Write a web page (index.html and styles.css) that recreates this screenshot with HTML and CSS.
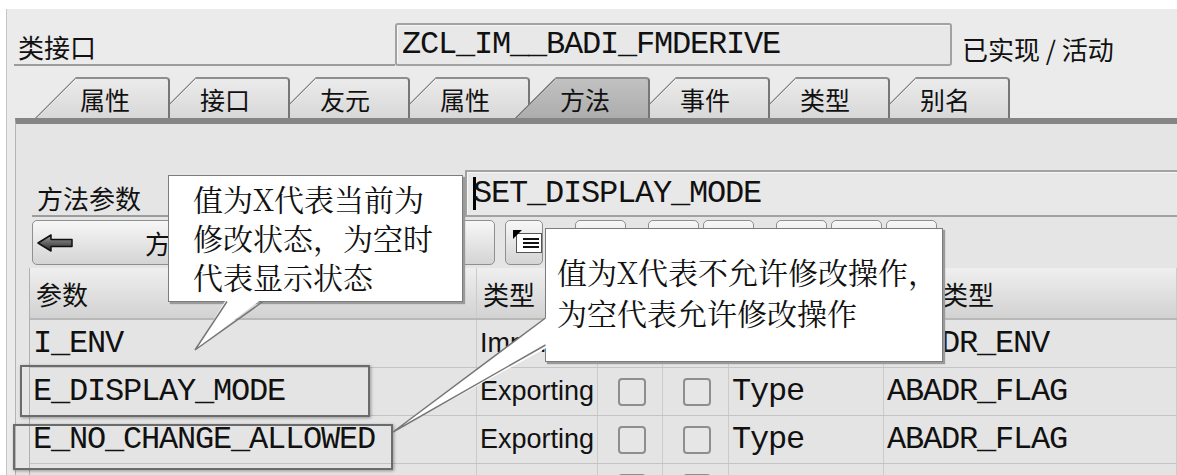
FILE: index.html
```html
<!doctype html>
<html lang="zh">
  <head>
    <meta charset="UTF-8" />
    <meta name="viewport" content="width=device-width, initial-scale=1.0" />
    <title>类接口 ZCL_IM__BADI_FMDERIVE</title>
    <link rel="stylesheet" href="styles.css">
  </head>
  <body>
    <div class="window">
      <div class="class-row">
        <div class="class-label">类接口</div>
        <div class="field class-name">ZCL_IM__BADI_FMDERIVE</div>
        <div class="status">已实现 / 活动</div>
      </div>

      <div class="tabs">
        <div class="tab">属性</div>
        <div class="tab">接口</div>
        <div class="tab">友元</div>
        <div class="tab">属性</div>
        <div class="tab active">方法</div>
        <div class="tab">事件</div>
        <div class="tab">类型</div>
        <div class="tab">别名</div>
      </div>

      <div class="panel">
        <div class="param-row">
          <div class="param-label">方法参数</div>
          <div class="field method-name"><span class="caret"></span>SET_DISPLAY_MODE</div>
        </div>

        <div class="toolbar">
          <button class="btn back">
            <svg width="36" height="18" viewBox="0 0 36 18">
              <defs>
                <linearGradient id="arrowFill" x1="0" y1="0" x2="0" y2="1">
                  <stop offset="0" stop-color="#a0a0a0" />
                  <stop offset="1" stop-color="#262626" />
                </linearGradient>
              </defs>
              <path d="M1 9 L14 1 L14 5.5 L35 5.5 L35 12.5 L14 12.5 L14 17 Z" fill="url(#arrowFill)" stroke="#111" stroke-width="1.5" stroke-linejoin="round" />
            </svg>
            <span class="back-text">方法</span>
          </button>
          <button class="btn icon-btn">
            <svg width="30" height="24" viewBox="0 0 30 24">
              <rect x="3.5" y="3.5" width="25" height="19" fill="#fff" stroke="#555" />
              <path d="M0 0 H9 L0 9 Z" fill="#000" />
              <path d="M10 9 H26 M10 13 H26 M10 17 H26" stroke="#111" stroke-width="2" />
            </svg>
          </button>
          <button class="btn tool lead"></button>
          <button class="btn tool group"></button>
          <button class="btn tool"></button>
          <button class="btn tool group"></button>
          <button class="btn tool"></button>
          <button class="btn tool"></button>
        </div>

        <div class="grid">
          <!-- headers of the columns 3-5 sit under the right balloon -->
          <div class="row head">
            <div class="cell">参数</div>
            <div class="cell">类型</div>
            <div class="cell"></div>
            <div class="cell"></div>
            <div class="cell"></div>
            <div class="cell">关联类型</div>
          </div>
          <div class="row">
            <div class="cell code">I_ENV</div>
            <div class="cell kind">Importing</div>
            <div class="cell"><span class="check"></span></div>
            <div class="cell"><span class="check"></span></div>
            <div class="cell code"></div>
            <div class="cell code">ABADR_ENV</div>
          </div>
          <div class="row">
            <div class="cell code">E_DISPLAY_MODE</div>
            <div class="cell kind">Exporting</div>
            <div class="cell"><span class="check"></span></div>
            <div class="cell"><span class="check"></span></div>
            <div class="cell code">Type</div>
            <div class="cell code">ABADR_FLAG</div>
          </div>
          <div class="row">
            <div class="cell code">E_NO_CHANGE_ALLOWED</div>
            <div class="cell kind">Exporting</div>
            <div class="cell"><span class="check"></span></div>
            <div class="cell"><span class="check"></span></div>
            <div class="cell code">Type</div>
            <div class="cell code">ABADR_FLAG</div>
          </div>
          <div class="row">
            <div class="cell code"></div>
            <div class="cell kind"></div>
            <div class="cell"><span class="check"></span></div>
            <div class="cell"><span class="check"></span></div>
            <div class="cell code"></div>
            <div class="cell code"></div>
          </div>

          <!-- highlight frames drawn over the two export rows -->
          <div class="mark mark-display"></div>
          <div class="mark mark-change"></div>
        </div>
      </div>
    </div>

    <div class="callout callout-display">
      值为X代表当前为<br>修改状态，为空时<br>代表显示状态
      <svg class="tail" viewBox="0 0 1 1">
        <polygon points="58,122 94,122 26,174" fill="#fff" />
        <polyline points="58,125.5 26,174 94,125.5" fill="none" stroke="#777" stroke-width="1.5" />
      </svg>
    </div>

    <div class="callout callout-change">
      值为X代表不允许修改操作，<br>为空代表允许修改操作
      <svg class="tail" viewBox="0 0 1 1">
        <polygon points="2,87 2,118 -153,203" fill="#fff" />
        <polyline points="-0.5,89 -153,203 -0.5,116" fill="none" stroke="#777" stroke-width="1.5" />
      </svg>
    </div>
  </body>
</html>
```

FILE: styles.css
```css
* {
  box-sizing: border-box;
}

body {
  margin: 0;
  height: 475px;
  overflow: hidden;
  background: #fff;
  color: #111;
  font-family: "Noto Sans CJK SC", sans-serif;
}

.window {
  margin: 9px 0 0 6px;
  min-height: 470px;
  background: #ebebeb;
  border-left: 1px solid #c6c6c6;
}

/* top line: class name */

.class-row {
  display: flex;
  height: 57px;
  padding-top: 14px;
}

.class-label {
  width: 381px;
  height: 43px;
  margin-left: 7px;
  padding: 6px 0 0 4px;
  border-bottom: 2px solid #9c9c9c;
  font-size: 26px;
  line-height: 35px;
}

.field {
  background: #e8e8e8;
  border: 2px solid #a2a2a2;
  border-radius: 3px;
  box-shadow: inset 1px 1px 0 #f6f6f6;
  font-family: "Liberation Mono", monospace;
  font-size: 32px;
  letter-spacing: -1.2px;
  white-space: nowrap;
}

.class-name {
  width: 557px;
  height: 43px;
  padding-left: 5px;
  line-height: 39px;
}

.status {
  margin-left: 10px;
  padding-top: 8px;
  font-size: 26px;
  line-height: 35px;
}

/* tab strip */

.tabs {
  display: flex;
  align-items: flex-end;
  height: 52px;
  padding-left: 28px;
}

.tab {
  width: 135px;
  height: 41px;
  margin-left: -15px;
  padding: 5px 0 0 45px;
  font-size: 25px;
  line-height: 30px;
  border-top: 2px solid #8e8e8e;
  border-right: 2px solid #767676;
  border-top-right-radius: 4px;
  clip-path: polygon(41px 0, 100% 0, 100% 100%, 0 100%);
  background:
    linear-gradient(to top left, transparent calc(50% - 1.2px), #858585 calc(50% - 1.2px), #858585 calc(50% + 1.2px), transparent calc(50% + 1.2px)) 0 0 / 41px 41px no-repeat border-box,
    linear-gradient(#ececec, #d8d8d8) border-box;
}

.tab:first-child {
  margin-left: 0;
}

.tab:nth-child(1) { z-index: 8; }
.tab:nth-child(2) { z-index: 7; }
.tab:nth-child(3) { z-index: 6; }
.tab:nth-child(4) { z-index: 5; }
.tab:nth-child(6) { z-index: 3; }
.tab:nth-child(7) { z-index: 2; }
.tab:nth-child(8) { z-index: 1; }

.tab.active {
  z-index: 9;
  background:
    linear-gradient(to top left, transparent calc(50% - 1.2px), #707070 calc(50% - 1.2px), #707070 calc(50% + 1.2px), transparent calc(50% + 1.2px)) 0 0 / 41px 41px no-repeat border-box,
    linear-gradient(#c2c2c2, #adadad) border-box;
}

/* tab page */

.panel {
  margin-left: 8px;
  background: #e5e5e5;
  border-left: 1px solid #b4b4b4;
  border-top: 6px solid #858585;
}

.param-row {
  display: flex;
  height: 47px;
  margin-top: 46px;
}

.param-label {
  width: 433px;
  margin-left: 16px;
  padding: 10px 0 0 5px;
  border-bottom: 2px solid #9c9c9c;
  font-size: 26px;
  line-height: 35px;
}

.method-name {
  flex: 1;
  border-right: none;
  border-radius: 0;
  padding-left: 6px;
  line-height: 43px;
}

.caret {
  display: inline-block;
  width: 3px;
  height: 33px;
  margin-right: -3px;
  vertical-align: middle;
  background: #000;
}

.toolbar {
  display: flex;
  height: 51px;
  padding: 3px 0 0 16px;
}

.btn {
  height: 45px;
  padding: 0;
  border: 1px solid #8f8f8f;
  border-radius: 5px;
  background: linear-gradient(#f7f7f7, #d4d4d4);
  font: inherit;
  color: inherit;
}

.back {
  width: 463px;
  display: flex;
  align-items: center;
  padding-left: 4px;
  font-size: 26px;
}

.back-text {
  margin-left: 72px;
}

.icon-btn {
  width: 38px;
  margin-left: 10px;
  padding: 3px 0 0 7px;
  text-align: left;
}

.tool {
  width: 51px;
  margin-left: 4px;
}

.tool.lead {
  margin-left: 32px;
}

.tool.group {
  margin-left: 22px;
}

/* parameter table */

.grid {
  position: relative;
  margin-left: 13px;
  border-left: 1px solid #b0b0b0;
}

.row {
  display: grid;
  grid-template-columns: 447px 121px 65px 66px 155px 1fr;
  height: 48px;
  border-bottom: 1px solid #c4c4c4;
  background: #e4e4e4;
}

.row.head {
  height: 52px;
  border-bottom: 2px solid #b8b8b8;
  background: linear-gradient(#efefef, #d2d2d2);
  font-size: 26px;
}

.cell {
  display: flex;
  align-items: center;
  padding-left: 3px;
  overflow: hidden;
  white-space: nowrap;
  border-right: 1px solid #cbcbcb;
}

.head .cell {
  padding-left: 6px;
}

.code {
  font-family: "Liberation Mono", monospace;
  font-size: 32px;
  letter-spacing: -1.2px;
}

.kind {
  font-family: "Liberation Sans", sans-serif;
  font-size: 27px;
}

.check {
  width: 28px;
  height: 28px;
  margin-left: 17px;
  border: 2px solid #8e8e8e;
  border-radius: 4px;
  background: #e6e6e6;
}

.mark {
  position: absolute;
  border: 2px solid #6b6b6b;
  box-shadow: 1px 1px 3px rgba(0, 0, 0, 0.35);
}

.mark-display {
  left: -10px;
  top: 97px;
  width: 350px;
  height: 52px;
}

.mark-change {
  left: -17px;
  top: 156px;
  width: 380px;
  height: 46px;
}

/* annotation balloons */

.callout {
  position: absolute;
  background: #fff;
  border: 1px solid #7c7c7c;
  box-shadow: 2px 2px 1px #9a9a9a;
  font-family: "Noto Serif CJK SC", "Liberation Serif", "Noto Sans CJK SC", serif;
  font-size: 30px;
  white-space: nowrap;
  color: #111;
}

.callout-display {
  left: 168px;
  top: 175px;
  width: 295px;
  height: 127px;
  padding: 3px 0 0 24px;
  line-height: 39px;
}

.callout-change {
  left: 545px;
  top: 228px;
  width: 398px;
  height: 134px;
  padding: 22px 0 0 11px;
  line-height: 41px;
}

.tail {
  position: absolute;
  left: 0;
  top: 0;
  width: 1px;
  height: 1px;
  overflow: visible;
}
```
